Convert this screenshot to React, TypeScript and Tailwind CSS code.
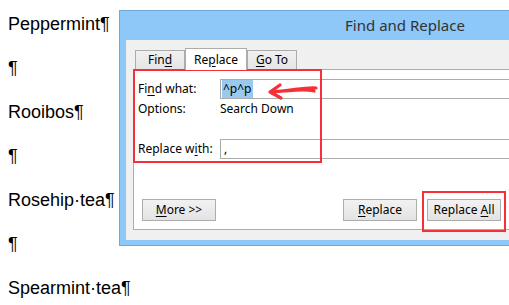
import React from 'react';

const docLines = ['Peppermint¶', '¶', 'Rooibos¶', '¶', 'Rosehip·tea¶', '¶', 'Spearmint·tea¶'];

// label with one underlined access key
const Key: React.FC<{ before: string; k: string; after: string }> = ({ before, k, after }) => (
  <span>
    {before}
    <span className="underline underline-offset-2">{k}</span>
    {after}
  </span>
);

const Btn: React.FC<{ children: React.ReactNode }> = ({ children }) => (
  <button className="w-[74px] h-[22px] shrink-0 border border-[#adadad] bg-gradient-to-b from-[#f2f2f2] to-[#e3e3e3] text-[12px] leading-none text-black">
    {children}
  </button>
);

const App: React.FC = () => {
  return (
    <div className="relative w-[509px] h-[305px] overflow-hidden bg-white flex">
      {/* document text behind the dialog */}
      <div className="w-[119px] shrink-0 pl-2 pt-[2px] font-['Liberation_Sans',sans-serif] text-[18px] text-black">
        {docLines.map((l, i) => (
          <div key={i} className="h-[44px] leading-[44px] whitespace-nowrap">
            {l}
          </div>
        ))}
      </div>

      {/* Find and Replace dialog, runs past the right edge */}
      <div className="mt-[10px] w-[572px] h-[236px] shrink-0 border border-[#6fa9dc] bg-[#8dc8f8] flex flex-col px-[6px] pb-[5px] font-['Noto_Sans',sans-serif] text-[12px] text-black">
        <div className="h-[29px] shrink-0 flex items-center justify-center text-[15px] text-[#333]">
          Find and Replace
        </div>
        <div className="flex-1 bg-[#f0f0f0] px-[7px] pt-[8px] pb-[10px] flex flex-col">
          {/* tabs */}
          <div className="flex items-end h-[21px] pl-[2px] relative z-10">
            <div className="w-[50px] h-[19px] border border-b-0 border-[#acacac] bg-gradient-to-b from-[#f0f0f0] to-[#e5e5e5] flex items-center justify-center">
              <Key before="Fin" k="d" after="" />
            </div>
            <div className="w-[62px] h-[22px] -mb-px border border-b-0 border-[#acacac] bg-white flex items-center justify-center">
              <Key before="Re" k="p" after="lace" />
            </div>
            <div className="w-[50px] h-[19px] border border-b-0 border-[#acacac] bg-gradient-to-b from-[#f0f0f0] to-[#e5e5e5] flex items-center justify-center">
              <Key before="" k="G" after="o To" />
            </div>
          </div>

          {/* tab page */}
          <div className="relative flex-1 border border-[#acacac] bg-white pl-[4px] pr-[7px] pt-[9px] flex flex-col">
            <div className="flex items-center h-[20px]">
              <div className="w-[82px] shrink-0">
                <Key before="Fi" k="n" after="d what:" />
              </div>
              <div className="flex-1 h-[20px] border border-[#ababab] bg-white flex items-center px-[1px]">
                <span className="bg-[#99c9ef] px-[1px]">^p^p</span>
              </div>
            </div>
            <div className="flex items-center h-[20px]">
              <div className="w-[82px] shrink-0">Options:</div>
              <div>Search Down</div>
            </div>
            <div className="flex items-center h-[20px] mt-[20px]">
              <div className="w-[82px] shrink-0">
                <Key before="Replace w" k="i" after="th:" />
              </div>
              <div className="flex-1 h-[20px] border border-[#ababab] bg-white flex items-center px-[3px]">
                ,
              </div>
            </div>

            <div className="flex items-center mt-[40px] pl-[4px]">
              <Btn>
                <Key before="" k="M" after="ore >>" />
              </Btn>
              <div className="flex-1" />
              <div className="flex gap-[10px] mr-[168px]">
                <Btn>
                  <Key before="" k="R" after="eplace" />
                </Btn>
                <Btn>
                  <Key before="Replace " k="A" after="ll" />
                </Btn>
              </div>
            </div>

            {/* red annotations */}
            <div className="absolute -left-px -top-px w-[189px] h-[94px] border-2 border-[#f53038]" />
            <div className="absolute left-[288px] top-[121px] w-[84px] h-[41px] border-2 border-[#f53038]" />
            <svg className="absolute left-[130px] top-[12px]" width="56" height="20" viewBox="0 0 56 20">
              <path
                d="M52 6 C40 5 28 9 6 10 M6 10 L16 3 M6 10 L17 16 M20 9 C32 8 42 7 50 9"
                fill="none"
                stroke="#f53038"
                strokeWidth="3.2"
                strokeLinecap="round"
              />
            </svg>
          </div>
        </div>
      </div>
    </div>
  );
};

export default App;
